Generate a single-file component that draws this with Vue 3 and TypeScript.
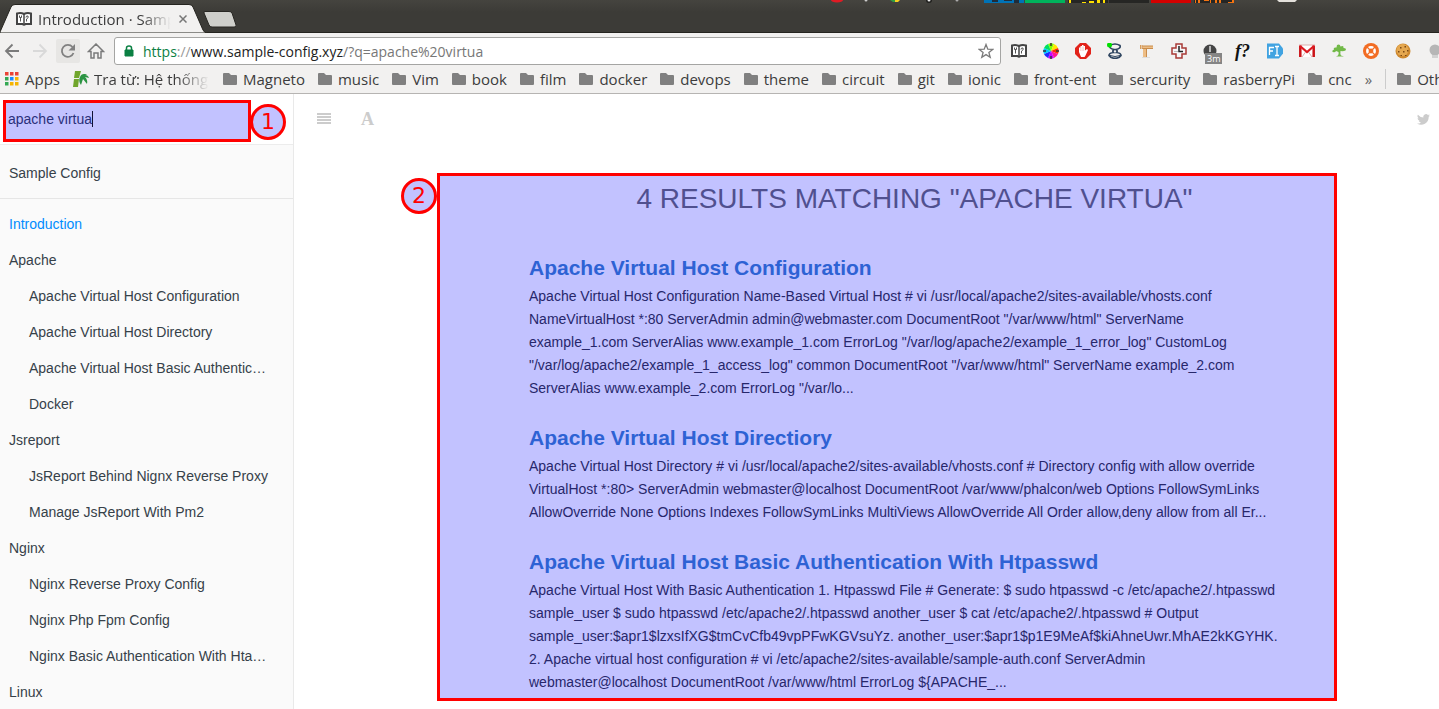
<script setup lang="ts">
import { ref } from 'vue'

interface NavItem {
  label: string
  child?: boolean
  active?: boolean
}

interface Result {
  title: string
  text: string
}

const query = ref('apache virtua')
const address = ref('apache%20virtua')

const bookmarks: string[] = [
  'Magneto', 'music', 'Vim', 'book', 'film', 'docker', 'devops', 'theme', 'circuit',
  'git', 'ionic', 'front-ent', 'sercurity', 'rasberryPi', 'cnc',
]

const nav: NavItem[] = [
  { label: 'Introduction', active: true },
  { label: 'Apache' },
  { label: 'Apache Virtual Host Configuration', child: true },
  { label: 'Apache Virtual Host Directory', child: true },
  { label: 'Apache Virtual Host Basic Authentication With Htpasswd', child: true },
  { label: 'Docker', child: true },
  { label: 'Jsreport' },
  { label: 'JsReport Behind Nignx Reverse Proxy', child: true },
  { label: 'Manage JsReport With Pm2', child: true },
  { label: 'Nginx' },
  { label: 'Nginx Reverse Proxy Config', child: true },
  { label: 'Nginx Php Fpm Config', child: true },
  { label: 'Nginx Basic Authentication With Htaccess', child: true },
  { label: 'Linux' },
]

const results: Result[] = [
  {
    title: 'Apache Virtual Host Configuration',
    text: `Apache Virtual Host Configuration Name-Based Virtual Host # vi /usr/local/apache2/sites-available/vhosts.conf
NameVirtualHost *:80 ServerAdmin admin@webmaster.com DocumentRoot "/var/www/html" ServerName
example_1.com ServerAlias www.example_1.com ErrorLog "/var/log/apache2/example_1_error_log" CustomLog
"/var/log/apache2/example_1_access_log" common DocumentRoot "/var/www/html" ServerName example_2.com
ServerAlias www.example_2.com ErrorLog "/var/lo...`,
  },
  {
    title: 'Apache Virtual Host Directiory',
    text: `Apache Virtual Host Directory # vi /usr/local/apache2/sites-available/vhosts.conf # Directory config with allow override
VirtualHost *:80> ServerAdmin webmaster@localhost DocumentRoot /var/www/phalcon/web Options FollowSymLinks
AllowOverride None Options Indexes FollowSymLinks MultiViews AllowOverride All Order allow,deny allow from all Er...`,
  },
  {
    title: 'Apache Virtual Host Basic Authentication With Htpasswd',
    text: `Apache Virtual Host With Basic Authentication 1. Htpasswd File # Generate: $ sudo htpasswd -c /etc/apache2/.htpasswd
sample_user $ sudo htpasswd /etc/apache2/.htpasswd another_user $ cat /etc/apache2/.htpasswd # Output
sample_user:$apr1$lzxsIfXG$tmCvCfb49vpPFwKGVsuYz. another_user:$apr1$p1E9MeAf$kiAhneUwr.MhAE2kKGYHK.
2. Apache virtual host configuration # vi /etc/apache2/sites-available/sample-auth.conf ServerAdmin
webmaster@localhost DocumentRoot /var/www/html ErrorLog \${APACHE_...`,
  },
]
</script>

<template>
  <div class="window">
    <header class="chrome">
      <div class="tabstrip">
        <svg class="panel-bits" width="500" height="3" viewBox="0 0 500 3" aria-hidden="true">
          <ellipse cx="17" cy="0" rx="6" ry="2.5" fill="#e01b24" />
          <circle cx="46" cy="0" r="1.5" fill="#ccc" />
          <path d="M70 0h5l1 2h-3z" fill="#2f9e44" /><path d="M75 0h5l-2 2h-3z" fill="#f5d020" />
          <circle cx="109" cy="0" r="3" fill="#1e1e1c" /><circle cx="109" cy="0" r="1.5" fill="#eee" />
          <circle cx="137" cy="0" r="1.5" fill="#aaa" />
          <path d="M164 0h40v3h-40z" fill="#0073b7" />
          <path d="M172 0h6v2h-6zM184 0h8v1h-8zM194 0h5v3h-5z" fill="#1d2d3c" />
          <path d="M205 0h40v3h-40z" fill="#00b35c" />
          <path d="M248 0h40v3h-40zM289 0h40v3h-40zM374 0h40v3h-40z" fill="#262624" />
          <path d="M249 0h2v3h-2zM262 2h4v1h-4zM269 1h5v2h-5zM277 0h3v3h-3zM283 0h2v3h-2z" fill="#ffdf00" />
          <path d="M331 0h40v3h-40z" fill="#d40000" />
          <path d="M375 0h1v3h-1zM378 0h2v3h-2zM384 0h5v1h-5zM390 0h1v3h-1zM395 0h2v3h-2zM399 0h2v3h-2zM408 2h6v1h-6zM412 0h2v3h-2z" fill="#f47411" />
          <path d="M457 0h20l-2 2h-16z" fill="#e4e1dc" />
        </svg>
        <div class="tab">
          <svg class="tab-shape" width="207" height="29" viewBox="0 0 207 29" aria-hidden="true">
            <path d="M0 28 11 3Q12 .5 15 .5H189Q192 .5 193 3L203 26Q204 28.500 207 29H0z" fill="#f2f1f0" stroke="#25241f" />
          </svg>
          <svg class="tab-icon" width="16" height="14" viewBox="0 0 16 14" aria-hidden="true">
            <path d="M1 1.500Q5 .5 8 2Q11 .5 15 1.500V12H9.500Q8 13.500 6.500 12H1z" fill="#fff" stroke="#444" stroke-width="2" />
            <path d="M8 2V12" stroke="#444" stroke-width="1.500" />
            <path d="M3.500 3.500v2h2v-2M4.500 5.500v4M10.500 9.500V7q2.500-1 1.500-3q-2-.5-2 1.500" fill="none" stroke="#555" />
          </svg>
          <span class="tab-title">Introduction · Sample</span>
          <button class="tab-close" type="button" aria-label="Close tab">
            <svg width="8" height="8" viewBox="0 0 8 8"><path d="M.5.5l7 7M7.500.5l-7 7" stroke="#777" stroke-width="1.500" /></svg>
          </button>
        </div>
        <button class="new-tab" type="button" aria-label="New tab">
          <svg width="34" height="17" viewBox="0 0 34 17">
            <path d="M2 .5H26Q28 .5 29 2L33 14Q34 16 31 16H9Q7 16 6 14L1 2Q.5.5 2 .5z" fill="#cfcfcb" stroke="#282723" />
          </svg>
        </button>
      </div>

      <div class="toolbar">
        <button class="tool" type="button" aria-label="Back">
          <svg width="16" height="16" viewBox="0 0 16 16"><path d="M15 8H2M8.500 1.500 2 8l6.500 6.500" fill="none" stroke="#7b7b7b" stroke-width="1.800" /></svg>
        </button>
        <button class="tool" type="button" aria-label="Forward">
          <svg width="16" height="16" viewBox="0 0 16 16"><path d="M1 8h13M7.500 1.500 14 8l-6.500 6.500" fill="none" stroke="#d9d9d9" stroke-width="1.800" /></svg>
        </button>
        <button class="tool hovered" type="button" aria-label="Reload">
          <svg width="16" height="16" viewBox="0 0 16 16"><path d="M13.500 10A6 6 0 1 1 12.500 4" fill="none" stroke="#808080" stroke-width="1.800" /><path d="M15 1v6.500H8.500z" fill="#808080" /></svg>
        </button>
        <button class="tool" type="button" aria-label="Home">
          <svg width="18" height="16" viewBox="0 0 18 16"><path d="M1.500 8.500 9 1l7.500 7.500H14V15H11V10H7V15H4V8.500z" fill="none" stroke="#7b7b7b" stroke-width="1.500" /></svg>
        </button>

        <div class="omnibox">
          <svg width="10" height="12" viewBox="0 0 10 12" aria-hidden="true">
            <path d="M1 5h8v6H1z" fill="#0b8043" stroke="#0b8043" /><path d="M2.500 5V3a2.500 2 0 0 1 5 0v2" fill="none" stroke="#0b8043" stroke-width="1.500" />
          </svg>
          <a class="url" href="#"><span class="scheme">https</span><span class="faint">://</span>www.sample-config.xyz<span class="path">/?q={{ address }}</span></a>
          <button class="star" type="button" aria-label="Bookmark this page">
            <svg width="16" height="16" viewBox="0 0 16 16"><path d="M8 1.500 9.800 6.200l4.900.2-3.800 3.100 1.300 4.800L8 11.600l-4.200 2.700 1.300-4.800L1.300 6.400l4.900-.2z" fill="#fff" stroke="#7b7b7b" stroke-width="1.300" /></svg>
          </button>
        </div>

        <div class="extensions">
          <svg viewBox="0 0 16 16"><path d="M1 2.500Q5 1.500 8 3Q11 1.500 15 2.500V13H9.500Q8 14.500 6.500 13H1z" fill="#fff" stroke="#444" stroke-width="2" /><path d="M8 3V13" stroke="#444" stroke-width="1.500" /><path d="M3.500 4.500v2h2v-2M4.500 6.500v4M10.500 10.500V8q2.500-1 1.500-3q-2-.5-2 1.500" fill="none" stroke="#555" /></svg>
          <svg viewBox="0 0 16 16">
            <path d="M8 8 5 1A7.500 7.500 0 0 1 11 1z" fill="#80ff00" /><path d="M8 8 11 1A7.500 7.500 0 0 1 15 5z" fill="#ffe600" />
            <path d="M8 8 15 5A7.500 7.500 0 0 1 15 11z" fill="#ff2a00" /><path d="M8 8 15 11A7.500 7.500 0 0 1 11 15z" fill="#ff1493" />
            <path d="M8 8 11 15A7.500 7.500 0 0 1 5 15z" fill="#c800ff" /><path d="M8 8 5 15A7.500 7.500 0 0 1 1 11z" fill="#1e2bff" />
            <path d="M8 8 1 11A7.500 7.500 0 0 1 1 5z" fill="#00c8ff" /><path d="M8 8 1 5A7.500 7.500 0 0 1 5 1z" fill="#00e060" />
            <path d="M8 0v3M8 13v3M0 8h3M13 8h3" stroke="#333" stroke-width="1.500" />
          </svg>
          <svg viewBox="0 0 16 16"><path d="M5 0h6l5 5v6l-5 5H5l-5-5V5z" fill="#e2231a" /><path d="M4 9V4.500h1.500V3H7V2h1.500v1H10v4.500l2-1.500 1 1-2.500 5.500L9.500 14H6z" fill="#fff" /><path d="M5.700 4.500V8M7.200 3.500V8M8.700 3.500V8" stroke="#e8aaa6" stroke-width=".5" /></svg>
          <svg viewBox="0 0 16 16"><path d="M3 2.500Q8-.5 13 2.500Q14 5.500 9 6.500H7Q2 5.500 3 2.500zM7 6.500Q5 8 6.500 9.500Q2 10 2 12.500Q4 15.500 8 15.200Q12 15.500 14 12.500Q14 10 9.500 9.500Q11 8 9 6.500" fill="none" stroke="#2f4560" stroke-width="1.700" /><path d="M3 12.500q5 2 10 0" fill="none" stroke="#2f4560" /><circle cx="2.500" cy="2" r="2.500" fill="#00e000" /></svg>
          <svg viewBox="0 0 16 16"><path d="M3 3h11v2.500H3zM4 3h3.500v11H4z" fill="#edbd85" /><path d="M3 5.500h11M7.500 5.500V14M3 3h11" stroke="#c98d4d" /><path d="M1.500 2v4M3 2v4" stroke="#d79c5c" /><path d="M3 14.500h8" stroke="#ddd" /></svg>
          <svg viewBox="0 0 16 16"><path d="M5 1h6v4h4v6h-4v4H5v-4H1V5h4z" fill="#f6f6f8" stroke="#a83a36" stroke-width="1.500" /><path d="M8 3v5.500h4" fill="none" stroke="#222" stroke-width="1.500" /><path d="M3 8.500h4" stroke="#bbb" /></svg>
          <span class="timer">
            <svg viewBox="0 0 16 16"><circle cx="7" cy="8" r="6.500" fill="#454545" /><path d="M7 3v6" stroke="#ddd" stroke-width="1.500" /></svg>
            <span class="timer-badge">3m</span>
          </span>
          <span class="font-ext">f?</span>
          <svg viewBox="0 0 16 16"><path d="M0 .5h12l4 5v5l-4 5H0z" fill="#41a3e1" /><path d="M2.500 12V4.500H7M2.500 8H6M8 3.500h4M10 3.500v9M8 12.500h4" fill="none" stroke="#fff" stroke-width="1.300" /></svg>
          <svg viewBox="0 0 16 16"><path d="M0 2h16v12H0z" fill="#fff" /><path d="M3 14 6.500 9M13 14 9.500 9M0 2h16" stroke="#ddb0b0" /><path d="M1.300 14V2.500M14.700 14V2.500" stroke="#cb1217" stroke-width="2.500" /><path d="M1 3 8 9l7-6" fill="none" stroke="#dd1a20" stroke-width="2.200" /></svg>
          <svg viewBox="0 0 16 16"><path d="M6 2q3-1.500 3.500 1.500Q13 2 12.500 5Q16 5 14.500 7.500q-2 1-5 .5q-.5 3 .5 4.500l3 1H5l2-1q1-2 .5-3.500L5 8q-1 2-3 1Q0 8 3 6.500Q2 4 5.500 4.500z" fill="#72b948" /></svg>
          <svg viewBox="0 0 16 16"><circle cx="8" cy="8" r="8" fill="#f26c23" /><circle cx="8" cy="8" r="3.700" fill="none" stroke="#fff" stroke-width="2.500" /><path d="M4 4l2.500 2.500M12 4 9.500 6.500M4 12l2.500-2.500M12 12 9.500 9.500" stroke="#f26c23" stroke-width="1.300" /></svg>
          <svg viewBox="0 0 16 16"><circle cx="8" cy="8" r="7.500" fill="#cf8a30" /><circle cx="7.500" cy="7" r="6" fill="#e5a850" /><path d="M5 4h1.500v1.500H5zM9.500 3H11v1.500H9.500zM3 8h1.500v1.500H3zM8 8h1.500v1.500H8zM12 7h1.500v1.500H12zM10 12h1.500v1H10zM5.500 12H7v1H5.500z" fill="#7a4815" /></svg>
          <svg viewBox="0 0 16 16"><circle cx="8" cy="7" r="5.500" fill="#b6b6b6" /><path d="M5 12h6v3H5z" fill="#d2d2d2" /></svg>
        </div>
      </div>

      <nav class="bookmarks" aria-label="Bookmarks">
        <a class="bookmark apps" href="#">
          <svg width="14" height="14" viewBox="0 0 14 14"><path d="M0 0h3.500v3.500H0zM5 0h3.500v3.500H5zM10 0h3.500v3.500H10z" fill="#ea4335" /><path d="M0 5h3.500v3.500H0zM0 10h3.500v3.500H0z" fill="#34a853" /><path d="M5 5h3.500v3.500H5z" fill="#1a8cff" /><path d="M10 5h3.500v3.500H10zM5 10h3.500v3.500H5zM10 10h3.500v3.500H10z" fill="#f5b400" /></svg>
          Apps
        </a>
        <a class="bookmark lookup" href="#">
          <svg width="16" height="16" viewBox="0 0 16 16"><path d="M2 0h6L6 7H1zM1 8h5l-1 8H0z" fill="#70a52c" /><path d="M7 6q1-3 4-3L14 3q-1 1-2 1q3 0 4 3l-4-1q3 3 2 7l-4-5q-1 3-2 6q-3-4-1-8z" fill="#2b9442" /></svg>
          <span>Tra từ: Hệ thống</span>
        </a>
        <a v-for="name in bookmarks" :key="name" class="bookmark" href="#">
          <svg width="14" height="12" viewBox="0 0 14 12"><path d="M1 0h5l2 2h5q1 0 1 1v8q0 1-1 1H1q-1 0-1-1V1q0-1 1-1z" fill="#808080" /></svg>
          {{ name }}
        </a>
        <button class="more" type="button" aria-label="More bookmarks">»</button>
        <a class="bookmark other" href="#">
          <svg width="14" height="12" viewBox="0 0 14 12"><path d="M1 0h5l2 2h5q1 0 1 1v8q0 1-1 1H1q-1 0-1-1V1q0-1 1-1z" fill="#808080" /></svg>
          Other
        </a>
      </nav>
    </header>

    <div class="book">
      <aside class="sidebar">
        <div class="search">
          <input v-model="query" class="search-input" type="text" aria-label="Type to search">
          <i class="caret"></i>
          <span class="badge badge-search">1</span>
        </div>
        <a class="brand" href="#">Sample Config</a>
        <ul class="summary">
          <li v-for="item in nav" :key="item.label">
            <a href="#" :class="{ child: item.child, active: item.active }">{{ item.label }}</a>
          </li>
        </ul>
      </aside>

      <main class="body">
        <div class="book-header">
          <button type="button" aria-label="Toggle summary">
            <svg width="14" height="12" viewBox="0 0 14 12"><path d="M0 1h14M0 4h14M0 7h14M0 10h14" stroke="#ccc" stroke-width="2" /></svg>
          </button>
          <button class="font-button" type="button" aria-label="Font settings">A</button>
          <a class="twitter" href="#" aria-label="Twitter">
            <svg width="13" height="11" viewBox="0 0 24 20"><path d="M24 2.400a10 10 0 0 1-2.800.8A5 5 0 0 0 23.300.5a10 10 0 0 1-3.100 1.200A4.900 4.900 0 0 0 11.800 6.200 14 14 0 0 1 1.700 1a4.900 4.900 0 0 0 1.500 6.600A5 5 0 0 1 1 7a4.900 4.900 0 0 0 3.900 4.900 5 5 0 0 1-2.200.1 4.900 4.900 0 0 0 4.600 3.400A10 10 0 0 1 0 17.500 14 14 0 0 0 21.500 5 10 10 0 0 0 24 2.400z" fill="#ccc" /></svg>
          </a>
        </div>
        <section class="results">
          <span class="badge badge-results">2</span>
          <h1>4 results matching "{{ query }}"</h1>
          <article v-for="result in results" :key="result.title">
            <h3><a href="#">{{ result.title }}</a></h3>
            <p>{{ result.text }}</p>
          </article>
        </section>
      </main>
    </div>
  </div>
</template>

<style>
body {
  margin: 0;
  overflow: hidden;
}
</style>

<style scoped>
* {
  box-sizing: border-box;
}
.window {
  display: flex;
  flex-direction: column;
  height: 100vh;
  overflow: hidden;
  background: #fff;
  font-family: "Liberation Sans", Arial, sans-serif;
  font-size: 14px;
}
a {
  color: inherit;
  text-decoration: none;
}
button {
  padding: 0;
  border: 0;
  background: none;
  font: inherit;
}
svg {
  display: block;
  flex: none;
}
.chrome {
  flex: none;
  height: 94px;
  border-bottom: 1px solid #b6b4b2;
  background: #f2f1f0;
  color: #3c3c3c;
  font-family: "Open Sans", "Noto Sans", sans-serif;
  font-size: 15px;
}
.tabstrip {
  position: relative;
  display: flex;
  align-items: flex-end;
  height: 33px;
  background: linear-gradient(#45443f, #3c3b37 12px);
  box-shadow: inset 0 -1px #25241f;
}
.panel-bits {
  position: absolute;
  top: 0;
  left: 820px;
}
.tab {
  position: relative;
  display: flex;
  align-items: center;
  width: 203px;
  height: 29px;
  padding-left: 16px;
}
.tab-shape {
  position: absolute;
  top: 0;
  left: 0;
}
.tab-icon,
.tab-title,
.tab-close {
  position: relative;
}
.tab-title {
  width: 134px;
  margin-left: 6px;
  overflow: hidden;
  white-space: nowrap;
  mask-image: linear-gradient(90deg, #000 104px, transparent 133px);
}
.tab-close {
  margin-left: 7px;
}
.new-tab {
  align-self: center;
  margin-top: 6px;
}
.toolbar {
  display: flex;
  align-items: center;
  gap: 4px;
  height: 36px;
}
.tool {
  display: flex;
  flex: none;
  align-items: center;
  justify-content: center;
  width: 24px;
  height: 24px;
  border-radius: 2px;
}
.hovered {
  background: #e7e6e4;
}
.omnibox {
  display: flex;
  flex: 1;
  align-items: center;
  gap: 9px;
  min-width: 0;
  height: 28px;
  margin-left: 2px;
  padding: 0 6px 0 9px;
  border: 1px solid #a5a5a3;
  border-radius: 3px;
  background: #fff;
}
.url {
  flex: 1;
  overflow: hidden;
  white-space: nowrap;
  color: #222;
  font-size: 14px;
}
.scheme {
  color: #0b8043;
}
.faint {
  color: #999;
}
.path {
  color: #777;
}
.extensions {
  display: flex;
  flex: none;
  gap: 16px;
  width: 428px;
  margin-left: 6px;
  overflow: hidden;
  height: 30px;
  padding-top: 7px;
}
.extensions svg {
  width: 16px;
  height: 16px;
}
.timer {
  position: relative;
  flex: none;
  width: 16px;
}
.timer-badge {
  position: absolute;
  top: 10px;
  left: 2px;
  padding: 0 2px;
  background: #858585;
  color: #fff;
  font-size: 9px;
  line-height: 11px;
}
.font-ext {
  flex: none;
  width: 16px;
  color: #111;
  font: italic bold 18px/16px "Liberation Serif", serif;
}
.bookmarks {
  display: flex;
  align-items: center;
  height: 19px;
  gap: 13px;
  padding-left: 5px;
  white-space: nowrap;
}
.bookmark {
  display: flex;
  flex: none;
  align-items: center;
  gap: 6px;
}
.lookup {
  gap: 5px;
  width: 137px;
  overflow: hidden;
  mask-image: linear-gradient(90deg, #000 104px, transparent 136px);
}
.more {
  flex: none;
  color: #666;
}
.other {
  padding-left: 11px;
  border-left: 1px solid #ccc;
}
.book {
  display: flex;
  flex: 1;
  min-height: 0;
}
.sidebar {
  flex: none;
  width: 294px;
  overflow: hidden;
  border-right: 1px solid #e9e9e9;
  background: #fafafa;
  color: #364149;
}
.search {
  position: relative;
  height: 51px;
  padding: 6px 42px 0 3px;
  border-bottom: 1px solid #ececec;
  background: #fff;
}
.search-input {
  display: block;
  width: 100%;
  height: 42px;
  padding: 0 2px 4px;
  border: 3px solid #f00;
  border-radius: 0;
  outline: 0;
  background: #c2c2ff;
  color: #2a307a;
  font: inherit;
}
.caret {
  position: absolute;
  top: 17px;
  left: 92px;
  width: 1px;
  height: 16px;
  background: #111133;
}
.badge {
  position: absolute;
  width: 36px;
  height: 36px;
  border: 3px solid #f00;
  border-radius: 50%;
  background: #c2c2ff;
  color: #f00;
  font: 22px/30px "DejaVu Sans", sans-serif;
  text-align: center;
}
.badge-search {
  top: 10px;
  right: 7px;
}
.badge-results {
  top: 2px;
  left: -39px;
}
.brand {
  display: block;
  height: 54px;
  padding: 0 9px;
  border-bottom: 1px solid #e6e6e6;
  line-height: 56px;
}
.summary {
  margin: 0;
  padding: 7px 0 0;
  list-style: none;
}
.summary a {
  display: block;
  padding: 0 24px 0 9px;
  overflow: hidden;
  line-height: 36px;
  text-overflow: ellipsis;
  white-space: nowrap;
}
.summary .child {
  padding-left: 29px;
}
.summary .active {
  color: #008cff;
}
.body {
  flex: 1;
  min-width: 0;
}
.book-header {
  display: flex;
  align-items: center;
  gap: 30px;
  height: 50px;
  padding: 0 9px 0 23px;
}
.font-button {
  color: #ccc;
  font: bold 18px/20px "Liberation Serif", serif;
}
.twitter {
  margin-left: auto;
}
.results {
  position: relative;
  margin: 29px 102px 0 143px;
  padding: 0 34px 4px 89px;
  border: 3px solid #f00;
  background: #c2c2ff;
  color: #27276b;
}
h1 {
  margin: 0 0 29px;
  color: #50508f;
  font-size: 28px;
  font-weight: 400;
  line-height: 46px;
  text-align: center;
  text-transform: uppercase;
}
article + article {
  margin-top: 21px;
}
h3 {
  margin: 0;
  color: #2e62d4;
  font-size: 21px;
  line-height: 34px;
}
p {
  margin: 0;
  line-height: 23px;
  white-space: pre-line;
}
</style>
